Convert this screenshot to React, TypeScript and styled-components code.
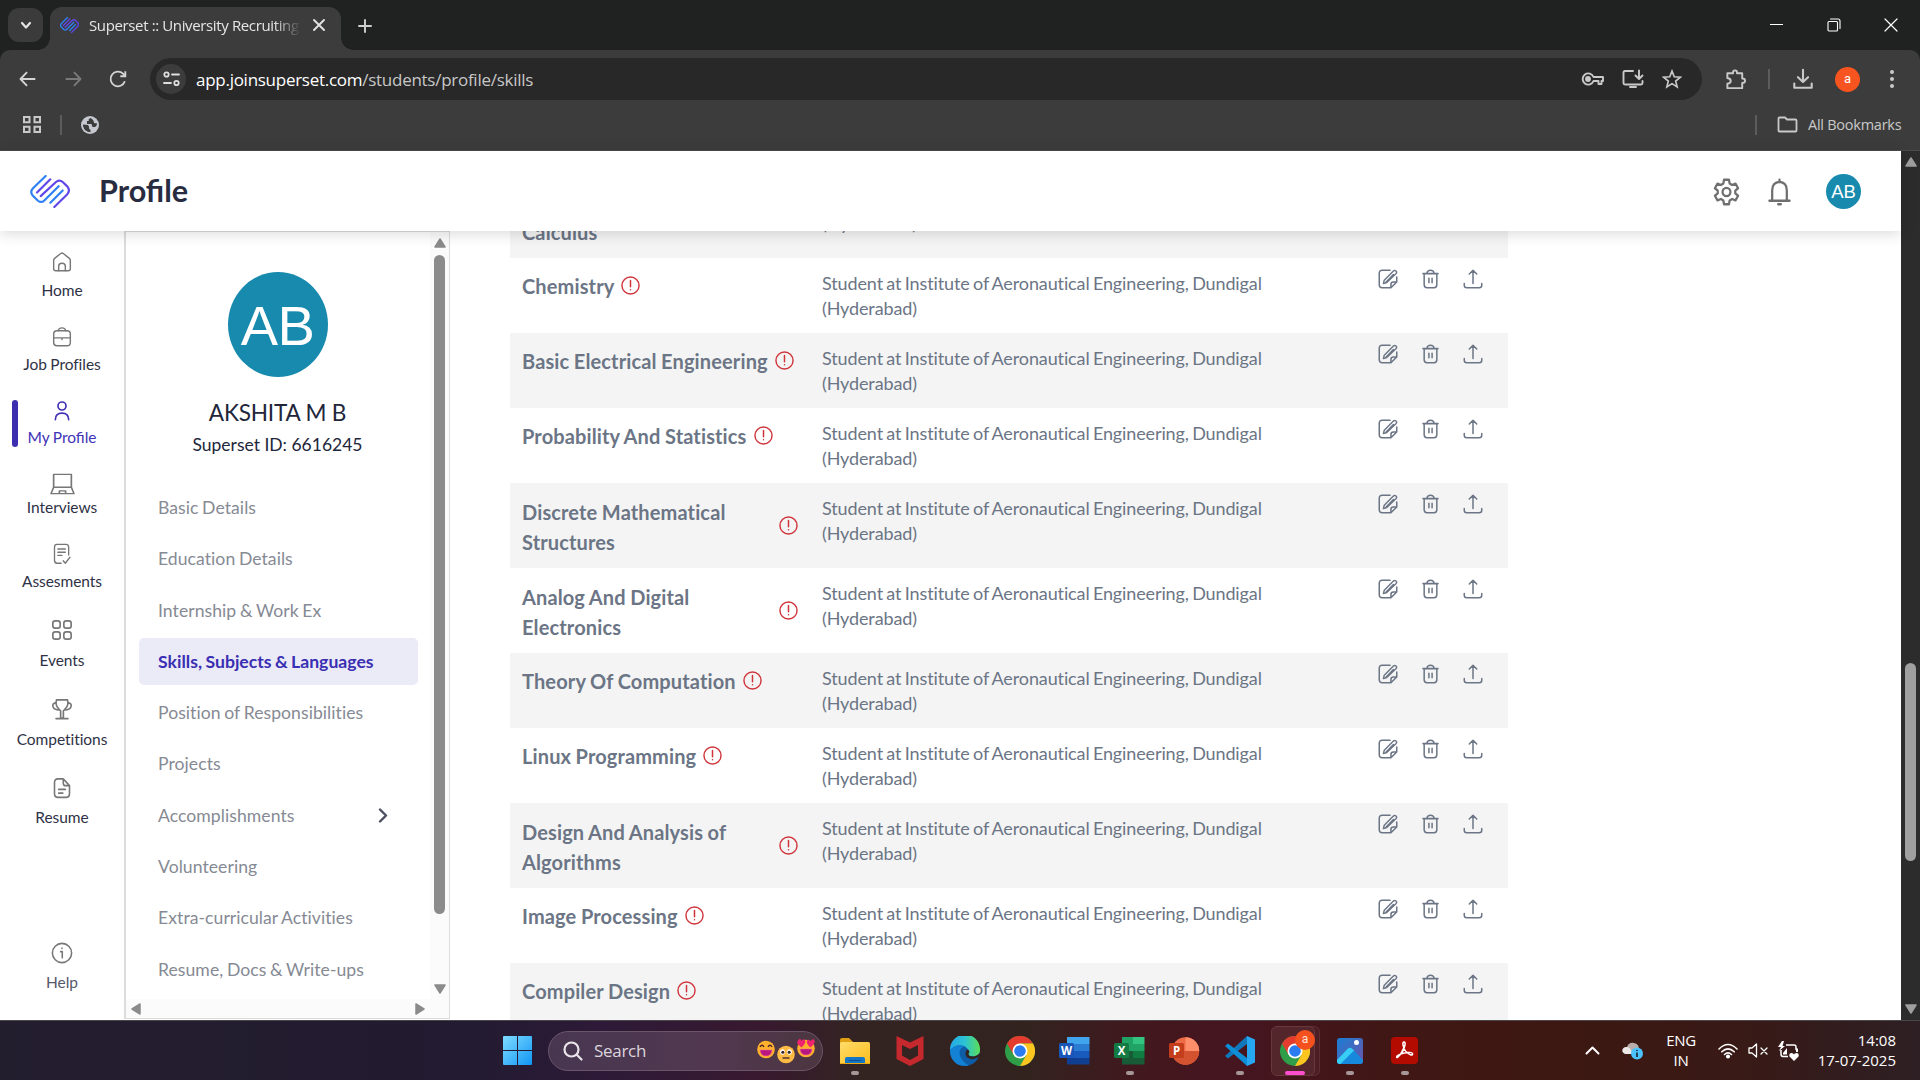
import React from "react";
import styled, { createGlobalStyle } from "styled-components";

const Global = createGlobalStyle`
  *, *::before, *::after { box-sizing: border-box; }
  html, body { margin: 0; padding: 0; overflow: hidden; background: #fff; }
  svg { display: block; flex: none; }
`;

const UI = `"Open Sans", "Noto Sans", sans-serif`;
const LATO = `Lato, "Noto Sans", sans-serif`;

const Screen = styled.div`
  width: 1920px;
  height: 1080px;
  display: flex;
  flex-direction: column;
  overflow: hidden;
  font-family: ${LATO};
`;

const Spacer = styled.div<{ $w?: number }>`
  flex: ${(p) => (p.$w ? "none" : 1)};
  width: ${(p) => p.$w ?? 0}px;
`;

const GradientDefs = styled.svg`
  position: absolute;
`;

/* ---------- Browser chrome ---------- */

const TabStrip = styled.div`
  height: 50px;
  flex: none;
  display: flex;
  align-items: flex-end;
  background: #1f2221;
  padding-left: 8px;
`;

const TabSearch = styled.div`
  width: 35px;
  height: 34px;
  margin: 0 7px 8px 0;
  border-radius: 11px;
  background: #3b3b3b;
  display: grid;
  place-items: center;
`;

const Tab = styled.div`
  position: relative;
  width: 291px;
  height: 43px;
  border-radius: 12px 12px 0 0;
  background: #3c3c3c;
  display: flex;
  align-items: center;
  padding: 0 14px 7px 10px;
  &::before, &::after {
    content: "";
    position: absolute;
    bottom: 0;
    width: 12px;
    height: 12px;
  }
  &::before { left: -12px; background: radial-gradient(circle at 0 0, transparent 11.5px, #3c3c3c 12px); }
  &::after { right: -12px; background: radial-gradient(circle at 100% 0, transparent 11.5px, #3c3c3c 12px); }
`;

const TabTitle = styled.div`
  width: 210px;
  margin: 0 14px 0 9px;
  overflow: hidden;
  white-space: nowrap;
  font: 400 15px/22px ${UI};
  letter-spacing: -0.37px;
  color: #e6e6e6;
  mask-image: linear-gradient(90deg, #000 88%, transparent 101%);
`;

const NewTab = styled.div`
  margin: 0 0 17.5px 17px;
`;

const WindowButtons = styled.div`
  margin-left: auto;
  height: 49px;
  margin-bottom: 1px;
  padding-right: 1px;
  display: flex;
  align-items: center;
  & > * { width: 57px; display: grid; place-items: center; }
`;

const Toolbar = styled.div`
  height: 58px;
  flex: none;
  display: flex;
  align-items: center;
  background: #1f2221;
`;

const ToolbarInner = styled.div`
  width: 100%;
  height: 58px;
  display: flex;
  align-items: center;
  background: #3c3c3c;
  border-radius: 10px 10px 0 0;
  padding-left: 17px;
`;

const NavIcons = styled.div`
  width: 133px;
  display: flex;
  gap: 23px;
`;

const Omnibox = styled.div`
  width: 1552px;
  height: 42px;
  border-radius: 21px;
  background: #282828;
  display: flex;
  align-items: center;
  padding: 0 20px 0 6px;
`;

const SiteInfo = styled.div`
  width: 30px;
  height: 30px;
  border-radius: 50%;
  background: #3c3c3c;
  display: grid;
  place-items: center;
`;

const Url = styled.div`
  flex: 1;
  margin: 1px 0 0 10px;
  font: 400 17px/24px ${UI};
  letter-spacing: -0.27px;
  color: #c7c7c7;
  white-space: nowrap;
  b { font-weight: 400; color: #fff; }
`;

const OmniIcons = styled.div`
  display: flex;
  align-items: center;
  gap: 18px;
`;

const ToolRight = styled.div`
  flex: 1;
  display: flex;
  align-items: center;
  padding: 0 15px 0 22px;
`;

const Divider = styled.div`
  width: 2px;
  height: 20px;
  background: #5c5c5c;
`;

const Account = styled.div`
  width: 25px;
  height: 25px;
  margin: 0 20px 0 21px;
  border-radius: 50%;
  background: #f8541f;
  color: #fff;
  font: 400 13px/24px Roboto, sans-serif;
  text-align: center;
`;

const Bookmarks = styled.div`
  height: 43px;
  flex: none;
  display: flex;
  align-items: center;
  background: #3c3c3c;
  padding: 0 17px 9px 22px;
  border-bottom: 1px solid #4a4a4a;
`;

const BookmarkLabel = styled.span`
  margin-left: 10px;
  width: 95px;
  white-space: nowrap;
  font: 400 14.5px/20px ${UI};
  letter-spacing: -0.25px;
  color: #c9c9c9;
`;

/* ---------- Page ---------- */

const Viewport = styled.div`
  height: 869px;
  flex: none;
  display: flex;
  background: #fff;
`;

const Page = styled.div`
  width: 1901px;
  display: flex;
  flex-direction: column;
`;

const Header = styled.header`
  position: relative;
  z-index: 2;
  height: 80px;
  flex: none;
  display: flex;
  align-items: center;
  background: #fff;
  padding: 0 40px 0 30px;
  box-shadow: 0 2px 14px rgba(0, 0, 0, 0.16);
`;

const Title = styled.h1`
  flex: 1;
  margin: 0 0 0 29px;
  font: 700 30.6px/40px ${LATO};
  color: #282c40;
`;

const HeaderIcons = styled.div`
  display: flex;
  align-items: center;
  margin-top: 1px;
`;

const SmallAvatar = styled.div`
  width: 35px;
  height: 35px;
  margin-left: 33px;
  border-radius: 50%;
  background: #178aae;
  color: #fff;
  font: 400 18.5px/36px "Liberation Sans", sans-serif;
  text-align: center;
`;

const Body = styled.div`
  flex: 1;
  min-height: 0;
  display: flex;
`;

const Rail = styled.nav`
  width: 124px;
  display: flex;
  flex-direction: column;
  align-items: center;
`;

const RailItem = styled.div<{ $mt: number; $gap: number; $active?: boolean; $dim?: boolean }>`
  position: relative;
  width: 124px;
  margin-top: ${(p) => p.$mt}px;
  display: flex;
  flex-direction: column;
  align-items: center;
  gap: ${(p) => p.$gap}px;
  color: ${(p) => (p.$active ? "#4133b7" : "#777")};
  span {
    font: 400 15.5px/20px ${LATO};
    letter-spacing: ${(p) => (p.$active ? "normal" : "-0.05px")};
    word-spacing: -0.5px;
    white-space: nowrap;
    color: ${(p) => (p.$active ? "#4133b7" : p.$dim ? "#55586a" : "#2f3246")};
  }
`;

const ActiveMark = styled.i`
  position: absolute;
  left: 12px;
  top: 1px;
  width: 6px;
  height: 47px;
  border-radius: 3px;
  background: #3b2fb0;
`;

const IconBox = styled.div`
  height: 24px;
  display: grid;
  place-items: center;
`;

const Panel = styled.aside`
  width: 326px;
  height: 788px;
  border: 1px solid #dcdcdc;
  border-left-width: 2px;
  display: grid;
  grid-template: 767px 19px / 1fr 19px;
`;

const PanelContent = styled.div`
  min-height: 0;
  overflow: hidden;
  padding-left: 13px;
  display: flex;
  flex-direction: column;
`;

const ProfileBlock = styled.div`
  width: 277px;
  display: flex;
  flex-direction: column;
  align-items: center;
`;

const BigAvatar = styled.div`
  width: 100px;
  height: 105px;
  margin-top: 40px;
  border-radius: 50%;
  background: #178aae;
  color: #fff;
  font: 400 56px/107px "Liberation Sans", sans-serif;
  text-align: center;
  letter-spacing: -0.5px;
`;

const Name = styled.div`
  margin-top: 22px;
  font: 400 22.6px/28px ${LATO};
  letter-spacing: -0.2px;
  color: #22263a;
`;

const SupersetId = styled.div`
  margin-top: 5px;
  font: 400 17.5px/26px ${LATO};
  color: #22263a;
`;

const Menu = styled.div`
  margin-top: 26px;
  display: flex;
  flex-direction: column;
  gap: 4.3px;
`;

const MenuItem = styled.div<{ $active?: boolean }>`
  width: 279px;
  height: 47px;
  flex: none;
  display: flex;
  align-items: center;
  justify-content: space-between;
  padding: 1px 30px 0 19px;
  border-radius: 5px;
  white-space: nowrap;
  font: ${(p) => (p.$active ? 700 : 400)} 17.6px/24px ${LATO};
  letter-spacing: ${(p) => (p.$active ? 0.01 : 0.05)}px;
  word-spacing: -0.9px;
  color: ${(p) => (p.$active ? "#3a2fb2" : "#868a94")};
  background: ${(p) => (p.$active ? "#ebeaf7" : "transparent")};
`;

const VBar = styled.div`
  background: #fbfbfb;
  display: flex;
  flex-direction: column;
  align-items: center;
  padding-top: 6px;
`;

const VThumb = styled.div`
  width: 11px;
  height: 659px;
  flex: none;
  margin: 7px 0 70px;
  border-radius: 6px;
  background: #8b8b8b;
`;

const HBar = styled.div`
  background: #fbfbfb;
  display: flex;
  align-items: center;
  justify-content: space-between;
  padding: 0 5px;
`;

const Corner = styled.div`
  background: #fbfbfb;
`;

const Table = styled.main`
  width: 998px;
  margin: -58px 0 0 60px;
  height: 847px;
  overflow: hidden;
`;

const Row = styled.div<{ $tall?: boolean; $shade?: boolean }>`
  display: flex;
  align-items: flex-start;
  height: ${(p) => (p.$tall ? 85 : 75)}px;
  background: ${(p) => (p.$shade ? "#f4f4f4" : "#fff")};
  padding-left: 12px;
`;

const Subject = styled.div<{ $tall?: boolean }>`
  width: 276px;
  margin-right: 24px;
  padding-top: ${(p) => (p.$tall ? 12.5 : 12)}px;
  display: flex;
  align-items: center;
  color: #6b7585;
`;

const SubjectName = styled.div<{ $tall?: boolean }>`
  position: relative;
  top: 1px;
  font: 700 20px/30px ${LATO};
  letter-spacing: 0.13px;
  word-spacing: -0.5px;
  white-space: pre-line;
  flex: ${(p) => (p.$tall ? 1 : "none")};
  margin-right: 7px;
`;

const Institute = styled.div`
  width: 540px;
  padding-top: 13px;
  font: 400 18px/25px ${LATO};
  letter-spacing: -0.12px;
  word-spacing: -1.1px;
  color: #6b7585;
  white-space: pre-line;
`;

const Actions = styled.div`
  display: flex;
  align-items: center;
  gap: 23px;
  margin-left: 15.5px;
  padding-top: 11px;
  color: #6b7585;
`;

const PageScroll = styled.div`
  width: 19px;
  background: #2c2c2c;
  display: flex;
  flex-direction: column;
  align-items: center;
  padding: 6px 0;
`;

const PageThumb = styled.div`
  width: 11px;
  height: 199px;
  margin: 496px 0 143px;
  border-radius: 6px;
  background: #9f9f9f;
`;

/* ---------- Taskbar ---------- */

const Taskbar = styled.footer`
  height: 60px;
  flex: none;
  display: flex;
  align-items: center;
  padding: 0 24px 0 503px;
  border-top: 1px solid #4b4649;
  background: linear-gradient(90deg, #231e2e 0, #221b31 470px, #2d1a38 600px, #38192f 760px, #332422 860px,
    #33231f 1030px, #43171e 1150px, #451520 1240px, #401714 1400px, #3c1812 1600px, #381a17 1750px, #2d1f24 1920px);
`;

const SearchBox = styled.div`
  width: 275px;
  height: 40px;
  margin: 0 4px 0 16px;
  border-radius: 20px;
  border: 1px solid #6b5569;
  background: linear-gradient(90deg, #483650, #513850 60%, #4c3640);
  display: flex;
  align-items: center;
  padding: 0 6px 0 14px;
  span {
    flex: 1;
    margin-left: 11px;
    font: 400 17px/24px ${UI};
    letter-spacing: -0.3px;
    color: #dcd5dd;
  }
`;

const TaskApp = styled.div<{ $active?: boolean }>`
  position: relative;
  width: 55px;
  height: 50px;
  display: grid;
  place-items: center;
  &::before {
    content: "";
    position: absolute;
    inset: 0 7px 0 4px;
    border-radius: 6px;
    border: ${(p) => (p.$active ? "1px solid #68383c" : "none")};
    background: ${(p) => (p.$active ? "#52262b" : "none")};
    box-shadow: ${(p) => (p.$active ? "5px 0 0 -1px #4b1e23, 5px 0 0 0 #5d2d32" : "none")};
  }
  svg { position: relative; }
`;

const Indicator = styled.i<{ $pink?: boolean }>`
  position: absolute;
  bottom: 1px;
  width: ${(p) => (p.$pink ? 20 : 8)}px;
  height: 4px;
  border-radius: 2px;
  background: ${(p) => (p.$pink ? "#ff4fd0" : "#a79799")};
`;

const AppBadge = styled.i`
  position: absolute;
  right: 7px;
  top: 4px;
  width: 20px;
  height: 20px;
  border-radius: 50%;
  background: #f4511e;
  color: #ffe5dc;
  font: 400 12px/18px Roboto, sans-serif;
  text-align: center;
`;

const OfficeTile = styled.div<{ $c: string }>`
  position: absolute;
  left: 12px;
  top: 17px;
  width: 15px;
  height: 15px;
  border-radius: 1.5px;
  background: ${(p) => p.$c};
  color: #fff;
  font: 700 11.5px/15px "Open Sans", sans-serif;
  text-align: center;
`;

const Tray = styled.div`
  margin-left: auto;
  display: flex;
  align-items: center;
  color: #fff;
`;

const TrayText = styled.div<{ $align: string; $w: number; $ml: number; $ls?: number }>`
  width: ${(p) => p.$w}px;
  margin-left: ${(p) => p.$ml}px;
  margin-top: -1px;
  text-align: ${(p) => p.$align};
  font: 400 15px/20px ${UI};
  letter-spacing: ${(p) => p.$ls ?? -0.3}px;
  white-space: pre-line;
`;

/* ---------- Icons ---------- */

type IcoProps = { w?: number; h?: number; vb?: string; sw?: number; c?: string; children: React.ReactNode };

const Ico = ({ w = 20, h, vb = "0 0 24 24", sw = 1.8, c = "currentColor", children }: IcoProps) => (
  <svg width={w} height={h ?? w} viewBox={vb} fill="none" stroke={c} strokeWidth={sw} strokeLinecap="round" strokeLinejoin="round" preserveAspectRatio="none">
    {children}
  </svg>
);

const SupersetLogo = ({ w, h, sw = 6.5 }: { w: number; h: number; sw?: number }) => (
  <Ico w={w} h={h} vb="0 0 120 100" sw={sw} c="#2f80f5">
    <path d="M47 3 9 40Q-1 51 8 62L24 78Q34 86 43 77L86 34M98 47 61 84" />
    <path d="M61 13 21 53M32 64 77 22Q88 12 99 22L113 36Q121 47 112 58L73 97" stroke="#6048e8" />
  </Ico>
);

const railIcons: Record<string, React.ReactNode> = {
  home: <Ico sw={1.7}><path d="M2 10Q2 8.500 3.500 7.300L10.500 1.800Q12 .8 13.500 1.800L20.500 7.300Q22 8.500 22 10V20Q22 22.500 19.500 22.500H4.500Q2 22.500 2 20Z" /><path d="M8 22.500V17Q8 13.500 12 13.500T16 17V22.500" /></Ico>,
  job: <Ico sw={1.7}><rect x="2" y="4.500" width="20" height="18" rx="4" /><path d="M7.500 4.500Q8 1 12 1T16.500 4.500M2 13H22M12 14V15" /></Ico>,
  profile: <Ico w={20} sw={2}><circle cx="12" cy="6" r="4.800" /><path d="M4 22.500Q4 14.500 12 14.500T20 22.500" /></Ico>,
  interviews: <Ico w={25} h={22} sw={1.6}><path d="M3.500 1.500H20.500V15.500H3.500ZM3.500 15.500 1 22.500H23L20.500 15.500M9 22V19.500H15V22" /></Ico>,
  assess: <Ico w={20} h={22} sw={1.6}><path d="M20 13V5Q20 1.500 17 1.500H6Q3 1.500 3 4.500V18.500Q3 22 6 22H11M7 6.500H16M7 10H16M7 13.500H12M13.500 19.500 16 22 21.500 15.500" /></Ico>,
  events: <Ico w={22} sw={1.8}><rect x="2" y="2" width="8" height="8" rx="2.600" /><rect x="14" y="2" width="8" height="8" rx="2.600" /><rect x="2" y="14" width="8" height="8" rx="2.600" /><rect x="14" y="14" width="8" height="8" rx="2.600" /></Ico>,
  comp: <Ico w={22} sw={1.8}><path d="M6 2H18L18.500 5Q18.500 10 13.500 14V22H10.500V14Q5.500 10 5.500 5ZM5.500 5Q1 6 2.200 9.500T9 13M18.500 5Q23 6 21.800 9.500T15 13M5.500 22.500H18.500" /></Ico>,
  resume: <Ico w={20} h={22} sw={1.9}><path d="M7 2H13.500L21 9.500V18Q21 22.200 17 22.200H7Q3 22.200 3 18V6Q3 2 7 2ZM13.500 2V6.500Q13.500 9.500 16.500 9.500H21M8 13.500H16M8 17.500H13" /></Ico>,
  help: <Ico w={22} sw={1.7}><circle cx="12" cy="12" r="10.500" /><path d="M10.500 10.500H12.300V17.300M12 6.700V7" /></Ico>,
};

const Alert = () => (
  <Ico w={19} h={19} sw={1.8} c="#d0353c"><circle cx="12" cy="12" r="10.800" /><path d="M12 5.800V13.500M12 17.300V17.500" strokeWidth="1.9" /></Ico>
);

const RowActions = () => (
  <Actions>
    <Ico w={20} sw={1.8}>
      <path d="M14.500 1.500H5Q1.500 1.500 1.500 5V19Q1.500 22.500 5 22.500H15.500L22.500 15.500V9.500M15.500 22V18.500Q15.500 15.500 18.500 15.500H22" />
      <path d="M18.500 2.500Q20 1 21.600 2.400T21.500 5.800L10.500 16.200 6.500 17.500 7.500 13.400ZM9.500 16 18.500 6.500" strokeWidth="1.700" />
    </Ico>
    <Ico w={19} h={20} sw={1.9}><path d="M4 5.500V19Q4 22.500 7.500 22.500H16.500Q20 22.500 20 19V5.500M2.500 5.500H21.500M7.500 5Q8 1.500 12 1.500T16.500 5M10 11V16.500M14 11V16.500" /></Ico>
    <Ico w={20} sw={1.8}><path d="M1.500 17.500V19.500Q1.500 22.500 4.500 22.500H19.500Q22.500 22.500 22.500 19.500V17.500M12 17.500V1.500M7.500 6 12 1.500 16.500 6" /></Ico>
  </Actions>
);

const Arrow = ({ dir, c = "#8b8b8b" }: { dir: "up" | "down" | "left" | "right"; c?: string }) => {
  const d = { up: "M6 1 11 9H1Z", down: "M1 1H11L6 9Z", left: "M1 6 9 1V11Z", right: "M9 6 1 1V11Z" }[dir];
  const vert = dir === "up" || dir === "down";
  return (
    <svg width={vert ? 12 : 10} height={vert ? 10 : 12} viewBox={vert ? "0 0 12 10" : "0 0 10 12"}>
      <path d={d} fill={c} stroke={c} strokeWidth="1.500" strokeLinejoin="round" />
    </svg>
  );
};

const Emoji = ({ kind }: { kind: "smile" | "flat" | "love" }) => (
  <svg width="20" height="26" viewBox="0 0 20 26">
    <g transform={kind === "flat" ? "translate(0 4.500)" : kind === "love" ? "translate(0 -1.500)" : "translate(0 -.500)"}>
      <circle cx="10" cy="12" r="8.800" fill={kind === "flat" ? "#fdbb45" : "#ffb12e"} />
      {kind === "flat" ? (
        <>
          <ellipse cx="6.500" cy="9.500" rx="2.300" ry="2.700" fill="#fff" /><ellipse cx="13.500" cy="9.500" rx="2.300" ry="2.700" fill="#fff" />
          <circle cx="6.800" cy="9.700" r="1.500" fill="#35202c" /><circle cx="13.200" cy="9.700" r="1.500" fill="#35202c" />
          <path d="M6.500 15.500H13.500" stroke="#5a302c" strokeWidth="1.500" />
        </>
      ) : (
        <path d="M4 12.500H16Q15.500 18.500 10 18.500T4 12.500Z" fill="#b8177f" stroke="#ff5aa0" strokeWidth=".5" />
      )}
      {kind === "smile" && <path d="M4 9.500Q6 6 8 9.500M12 9.500Q14 6 16 9.500" fill="none" stroke="#4a2430" strokeWidth="1.400" />}
      {kind === "love" && <path d="M5.500 11Q-.5 7 2 4T5.500 4.500Q7.500 1.500 9 4T5.500 11ZM14.500 11Q10 7 11 4.500T14.500 4.500Q17.500 1.500 18.500 4T14.500 11Z" fill="#f0246e" />}
    </g>
  </svg>
);

const Chrome = () => (
  <svg width="30" height="30" viewBox="0 0 48 48">
    <circle cx="24" cy="24" r="24" fill="#2e9e49" />
    <path d="M3.200 12A24 24 0 0 1 44.800 12H24L13.600 30Z" fill="#e33b2e" />
    <path d="M44.800 12A24 24 0 0 1 24 48L34.400 30 24 12Z" fill="#fcc51f" />
    <circle cx="24" cy="24" r="12" fill="#fff" /><circle cx="24" cy="24" r="9.300" fill="#2b7cf0" />
  </svg>
);

const taskApps: { id: string; icon: React.ReactNode; dot?: boolean; tile?: [string, string] }[] = [
  { id: "files", dot: true, icon: <svg width="30" height="28" viewBox="0 0 30 28"><path d="M0 3Q0 1 2 1H9L13 5V10H0Z" fill="#dfa013" /><rect y="5" width="30" height="22" rx="1.500" fill="url(#gFolder)" /><path d="M5 27V22Q5 20 7 20H23Q25 20 25 22V27Z" fill="#1275c8" /><path d="M9 23.500H21" stroke="#0b4f8c" strokeWidth="1" /><path d="M0 26.500H30" stroke="#e8a910" /></svg> },
  { id: "mcafee", icon: <svg width="28" height="30" viewBox="0 0 28 30"><path d="M.5 0 14 6.500 27.500 0V23L14 30 .5 23ZM6 9V19.500L14 24 22 19.500V9L14 13Z" fill="#c5282d" fillRule="evenodd" /></svg> },
  { id: "edge", icon: <svg width="30" height="30" viewBox="0 0 30 30"><circle cx="15" cy="15" r="15" fill="#0d5ca8" /><path d="M0 14A15 15 0 0 1 30 13Q30.500 20 23 20.500 17 20.500 18 17.500 20 14 15 10.500 7 7 0 14Z" fill="url(#gEdge)" /><path d="M0 14Q7 7 14 10.500 8 13 10 20 13 27 19 29.400 8 31.500 3 24 0 20 0 14Z" fill="#1482d4" /><path d="M30 20Q26 24 21 23 15 22 15.500 17 16 13.500 18 13.500 20.500 15.500 18.500 18 18.500 20.500 24 20.500 28 20 29.600 17Z" fill="#332321" /></svg> },
  { id: "chrome", icon: <Chrome /> },
  { id: "word", tile: ["W", "#1a56b8"], icon: <svg width="30" height="28" viewBox="0 0 30 28"><rect x="7" width="22.500" height="7" fill="#41a5ee" /><rect x="7" y="7" width="22.500" height="7" fill="#2b7cd3" /><rect x="7" y="14" width="22.500" height="7" fill="#185abd" /><rect x="7" y="21" width="22.500" height="6.500" fill="#103f91" /></svg> },
  { id: "excel", dot: true, tile: ["X", "#137a43"], icon: <svg width="30" height="28" viewBox="0 0 30 28"><path d="M7 0H18V14H7Z" fill="#21a366" /><path d="M18 0H29.500V7H18Z" fill="#33c481" /><path d="M18 7H29.500V14H18Z" fill="#21a366" /><path d="M7 14H18V21H7Z" fill="#185c37" /><path d="M18 14H29.500V21H18Z" fill="#107c41" /><path d="M7 21H29.500V27.500H7Z" fill="#185c37" /></svg> },
  { id: "ppt", tile: ["P", "#c43e1c"], icon: <svg width="30" height="28" viewBox="0 0 30 28"><circle cx="15.500" cy="14" r="13.700" fill="#ed6c47" /><path d="M15.500.3A13.700 13.700 0 0 1 29.200 14H15.500Z" fill="#ff8f6b" /><path d="M29.200 14A13.700 13.700 0 0 1 1.800 14Z" fill="#d35230" /></svg> },
  { id: "code", dot: true, icon: <svg width="30" height="30" viewBox="0 0 30 30"><path d="M22 8 3 22.500 0 20 22 0Z" fill="#1177bb" /><path d="M22 22 3 7.500 0 10 22 30Z" fill="#0d8ed6" /><path d="M22 0 30 3.500V26.500L22 30Z" fill="#27a7f2" /></svg> },
  { id: "active", icon: <Chrome /> },
  { id: "photos", dot: true, icon: <svg width="26" height="26" viewBox="0 0 26 26"><rect width="26" height="26" rx="3" fill="url(#gPhoto)" /><path d="M0 22 10.500 11Q13 8.500 15.500 11L26 22V23Q26 26 23 26H3Q0 26 0 23Z" fill="#1689dc" /><path d="M0 22 10.500 11Q13 8.500 15.500 11L17 12.500 3.500 26H3Q0 26 0 23Z" fill="#38cdf5" /><circle cx="19.500" cy="4.500" r="2.500" fill="#fff" /></svg> },
  { id: "acrobat", dot: true, icon: <svg width="27" height="27" viewBox="0 0 27 27"><rect width="27" height="27" rx="4" fill="#b30b00" /><path d="M6 20Q12 17 14 8 14.500 5 13 5T12 8Q13 15 20 18 22 18 21.500 16.500T17 15.500Q9 16.500 6 19 5 21 6.500 20.500 10 18 14 8" fill="none" stroke="#fff" strokeWidth="1.500" /></svg> },
];

/* ---------- Data ---------- */

const rail: { id: string; label: string; mt: number; gap: number }[] = [
  { id: "home", label: "Home", mt: 19, gap: 6 },
  { id: "job", label: "Job Profiles", mt: 25, gap: 5 },
  { id: "profile", label: "My Profile", mt: 25, gap: 4 },
  { id: "interviews", label: "Interviews", mt: 25, gap: 1 },
  { id: "assess", label: "Assesments", mt: 25, gap: 5 },
  { id: "events", label: "Events", mt: 27, gap: 8 },
  { id: "comp", label: "Competitions", mt: 27, gap: 8 },
  { id: "resume", label: "Resume", mt: 27, gap: 7 },
  { id: "help", label: "Help", mt: 114, gap: 7 },
];

const menu = [
  "Basic Details", "Education Details", "Internship & Work Ex", "Skills, Subjects & Languages",
  "Position of Responsibilities", "Projects", "Accomplishments", "Volunteering",
  "Extra-curricular Activities", "Resume, Docs & Write-ups",
];

const subjects = [
  "Linear Algebra And\nCalculus", "Chemistry", "Basic Electrical Engineering", "Probability And Statistics",
  "Discrete Mathematical\nStructures", "Analog And Digital\nElectronics", "Theory Of Computation",
  "Linux Programming", "Design And Analysis of\nAlgorithms", "Image Processing", "Compiler Design",
];

const INSTITUTE = "Student at Institute of Aeronautical Engineering, Dundigal\n(Hyderabad)";

export default function App() {
  return (
    <Screen>
      <Global />
      <GradientDefs width="0" height="0">
        <defs>
          <linearGradient id="gFolder" x1="0" y1="0" x2="1" y2="1"><stop stopColor="#ffdc6a" /><stop offset="1" stopColor="#fbbd1d" /></linearGradient>
          <linearGradient id="gEdge"><stop stopColor="#25a8e8" /><stop offset=".5" stopColor="#2cc3d3" /><stop offset="1" stopColor="#5bdd55" /></linearGradient>
          <linearGradient id="gPhoto" x1="0" y1="0" x2="1" y2="1"><stop stopColor="#187fd5" /><stop offset="1" stopColor="#6e53a8" /></linearGradient>
          <linearGradient id="gWin" x1="0" y1="0" x2="1" y2="1"><stop stopColor="#7fdcff" /><stop offset="1" stopColor="#1196f5" /></linearGradient>
        </defs>
      </GradientDefs>

      <TabStrip>
        <TabSearch><Ico w={12} h={9} vb="0 0 12 9" sw={2.2} c="#e3e3e3"><path d="M2 2 6 6.500 10 2" /></Ico></TabSearch>
        <Tab>
          <SupersetLogo w={19} h={16} sw={8.5} />
          <Spacer $w={1} />
          <TabTitle>Superset :: University Recruiting</TabTitle>
          <Ico w={12} h={12} vb="0 0 12 12" sw={1.9} c="#e3e3e3"><path d="M1 1 11 11M11 1 1 11" /></Ico>
        </Tab>
        <NewTab><Ico w={14} h={14} vb="0 0 14 14" sw={1.9} c="#d0d0d0"><path d="M7 1V13M1 7H13" /></Ico></NewTab>
        <WindowButtons>
          <div><svg width="13" height="3"><path d="M0 1.500H13" stroke="#fff" /></svg></div>
          <div><Ico w={14} h={14} vb="0 0 14 14" sw={1.1} c="#fff"><rect x="1" y="3.500" width="9.500" height="9.500" rx="1" /><path d="M3.500 1H11Q13 1 13 3V10.500" /></Ico></div>
          <div><Ico w={14} h={14} vb="0 0 14 14" sw={1.2} c="#fff"><path d="M1 1 13 13M13 1 1 13" /></Ico></div>
        </WindowButtons>
      </TabStrip>

      <Toolbar>
        <ToolbarInner>
          <NavIcons>
            <Ico w={22} sw={2} c="#d4d4d4"><path d="M20 12H4M11 4.500 3.800 12 11 19.500" strokeLinecap="butt" /></Ico>
            <Ico w={22} sw={2} c="#7a7a7a"><path d="M4 12H20M13 4.500 20.200 12 13 19.500" strokeLinecap="butt" /></Ico>
            <Ico w={22} sw={2} c="#d4d4d4"><path d="M19.500 14.500A8 8 0 1 1 17.500 6.200L19.500 8.500M20 3.500V9H14.500" strokeLinecap="butt" strokeLinejoin="miter" /></Ico>
          </NavIcons>
          <Omnibox>
            <SiteInfo><Ico w={17} h={16} vb="0 0 17 16" sw={1.8} c="#dedede"><circle cx="3.500" cy="3.500" r="2.200" /><path d="M9 3.500H16M1 12H8" /><circle cx="13.500" cy="12" r="2.200" /></Ico></SiteInfo>
            <Url><b>app.joinsuperset.com</b>/students/profile/skills</Url>
            <OmniIcons>
              <Ico w={23} h={16} vb="0 0 23 16" sw={1.9} c="#c9c9c9"><path d="M12.500 6H22V10H20.500V13H17.500V10H12.500A5.600 5.600 0 1 1 12.500 6Z" /><circle cx="7" cy="8" r="2" fill="#c9c9c9" /></Ico>
              <Ico w={22} h={20} vb="0 0 22 20" sw={1.9} c="#c9c9c9"><path d="M11 2H3Q1.500 2 1.500 3.500V14Q1.500 15.500 3 15.500H19Q20.500 15.500 20.500 14V12M8 18H14M17 1.500V9.500M13.500 6.500 17 10 20.500 6.500" /></Ico>
              <Ico w={20} sw={2} c="#c9c9c9"><path d="M12 2.500 14.700 9.300 22 9.800 16.400 14.400 18.200 21.500 12 17.600 5.800 21.500 7.600 14.400 2 9.800 9.300 9.300Z" strokeLinejoin="miter" /></Ico>
            </OmniIcons>
          </Omnibox>
          <ToolRight>
            <Ico w={23} sw={2} c="#c9c9c9"><path d="M4.500 5.500H9.500Q9 2.500 11.500 2.500T13.500 5.500H19V11Q22 11 22 13.300T19 15.500V21H3.500V16.500Q7 16 7 13.500T3.500 10.500V5.500Z" /></Ico>
            <Spacer $w={21} />
            <Divider />
            <Spacer $w={22} />
            <Ico w={22} sw={2.3} c="#c9c9c9"><path d="M12 2V14.500M6.500 10 12 15.200 17.500 10M2.500 17V21.500H21.500V17" /></Ico>
            <Account>a</Account>
            <svg width="24" height="20" viewBox="0 0 24 20" fill="#c9c9c9"><circle cx="12" cy="3" r="2" /><circle cx="12" cy="10" r="2" /><circle cx="12" cy="17" r="2" /></svg>
          </ToolRight>
        </ToolbarInner>
      </Toolbar>

      <Bookmarks>
        <Ico w={20} h={19} vb="0 0 20 19" sw={2} c="#c9c9c9"><path d="M2 2H7.500V7.200H2ZM12.500 2H18V7.200H12.500ZM2 11.800H7.500V17H2ZM12.500 11.800H18V17H12.500Z" strokeLinejoin="miter" /></Ico>
        <Spacer $w={18} />
        <Divider />
        <Spacer $w={19} />
        <svg width="18" height="18" viewBox="0 0 18 18"><circle cx="9" cy="9" r="9" fill="#c5c9cf" /><path d="M9.500 2Q6.500 3.500 8 5H6V8H10.500L11.500 11H14Q15.800 10 16.200 7.500L13 7Q13 4 9.500 2ZM2 8.500 7 9Q8.500 10.500 8 12.500L9.500 14V16.200Q3.500 16 2 10Z" fill="#3c3c3c" /></svg>
        <Spacer />
        <Divider />
        <Spacer $w={20} />
        <Ico w={21} h={17} vb="0 0 21 17" sw={1.8} c="#c9c9c9"><path d="M1.500 2.500Q1.500 1.500 2.500 1.500H8L10 3.500H18.500Q19.500 3.500 19.500 4.500V14.500Q19.500 15.500 18.500 15.500H2.500Q1.500 15.500 1.500 14.500Z" /></Ico>
        <BookmarkLabel>All Bookmarks</BookmarkLabel>
      </Bookmarks>

      <Viewport>
        <Page>
          <Header>
            <SupersetLogo w={40} h={33} />
            <Title>Profile</Title>
            <HeaderIcons>
              <Ico w={27} h={28} sw={2} c="#6f6f6f"><path d="M9.800 1.500H14.200L14.800 4.700 17 6 20 4.900 22.300 8.800 19.800 10.800V13.200L22.300 15.200 20 19.100 17 18 14.800 19.300 14.200 22.500H9.800L9.200 19.300 7 18 4 19.100 1.700 15.200 4.200 13.200V10.800L1.700 8.800 4 4.900 7 6 9.200 4.700Z" /><circle cx="12" cy="12" r="3.500" /></Ico>
              <Spacer $w={26} />
              <Ico w={27} h={28} sw={2} c="#6f6f6f"><path d="M3 19.500H21M5.500 19.500V10.500Q5.500 3.800 12 3.300 18.500 3.800 18.500 10.500V19.500M12 3V1.500M10.800 22.500H13.200" /></Ico>
              <SmallAvatar>AB</SmallAvatar>
            </HeaderIcons>
          </Header>
          <Body>
            <Rail>
              {rail.map((r) => (
                <RailItem key={r.id} $mt={r.mt} $gap={r.gap} $active={r.id === "profile"} $dim={r.id === "help"}>
                  {r.id === "profile" && <ActiveMark />}
                  <IconBox>{railIcons[r.id]}</IconBox>
                  <span>{r.label}</span>
                </RailItem>
              ))}
            </Rail>
            <Panel>
              <PanelContent>
                <ProfileBlock>
                  <BigAvatar>AB</BigAvatar>
                  <Name>AKSHITA M B</Name>
                  <SupersetId>Superset ID: 6616245</SupersetId>
                </ProfileBlock>
                <Menu>
                  {menu.map((m, i) => (
                    <MenuItem key={m} $active={i === 3}>
                      {m}
                      {m === "Accomplishments" && <Ico w={10} h={15} vb="0 0 10 15" sw={2.4} c="#4b4f60"><path d="M2 1.500 8 7.500 2 13.500" /></Ico>}
                    </MenuItem>
                  ))}
                </Menu>
              </PanelContent>
              <VBar><Arrow dir="up" /><VThumb /><Arrow dir="down" /></VBar>
              <HBar><Arrow dir="left" /><Arrow dir="right" /></HBar>
              <Corner />
            </Panel>
            <Table>
              {subjects.map((s, i) => {
                const tall = s.includes("\n");
                return (
                  <Row key={s} $tall={tall} $shade={i % 2 === 0}>
                    <Subject $tall={tall}>
                      <SubjectName $tall={tall}>{s}</SubjectName>
                      <Alert />
                    </Subject>
                    <Institute>{INSTITUTE}</Institute>
                    <RowActions />
                  </Row>
                );
              })}
            </Table>
          </Body>
        </Page>
        <PageScroll><Arrow dir="up" c="#9f9f9f" /><PageThumb /><Arrow dir="down" c="#9f9f9f" /></PageScroll>
      </Viewport>

      <Taskbar>
        <svg width="29" height="29" viewBox="0 0 29 29"><path d="M1 0H14V14H0V1Q0 0 1 0ZM15 0H28Q29 0 29 1V14H15ZM0 15H14V29H1Q0 29 0 28ZM15 15H29V28Q29 29 28 29H15Z" fill="url(#gWin)" /></svg>
        <SearchBox>
          <Ico w={20} h={20} vb="0 0 20 20" sw={2.2} c="#e9e4ea"><circle cx="8.500" cy="8.500" r="7" /><path d="M13.800 13.800 18.500 18.500" /></Ico>
          <span>Search</span>
          <Emoji kind="smile" /><Emoji kind="flat" /><Emoji kind="love" />
        </SearchBox>
        {taskApps.map((a) => (
          <TaskApp key={a.id} $active={a.id === "active"}>
            {a.icon}
            {a.tile && <OfficeTile $c={a.tile[1]}>{a.tile[0]}</OfficeTile>}
            {a.id === "active" && <AppBadge>a</AppBadge>}
            {a.dot && <Indicator />}
            {a.id === "active" && <Indicator $pink />}
          </TaskApp>
        ))}
        <Tray>
          <Ico w={15} h={9} vb="0 0 15 9" sw={2} c="#fff"><path d="M1.500 7.500 7.500 1.500 13.500 7.500" /></Ico>
          <Spacer $w={22} />
          <svg width="22" height="20" viewBox="0 0 22 20"><path d="M4 13Q0 12 .5 9T5 6Q7 1 12 2T17 8V13Z" fill="#b9adab" /><path d="M4 13Q0 12 .5 9T5 6Q9 6 10 13Z" fill="#ece8e7" /><circle cx="15" cy="12.500" r="6" fill="#4cc2ff" /><path d="M15 11.500V16M15 9V10" stroke="#12222c" strokeWidth="1.600" /></svg>
          <TrayText $align="center" $w={34} $ml={20}>{"ENG\nIN"}</TrayText>
          <Spacer $w={20} />
          <Ico w={20} h={16} vb="0 0 20 16" sw={1.6} c="#fff"><path d="M1 6Q10-3 19 6M3.800 8.800Q10 2.800 16.200 8.800M6.500 11.500Q10 8.300 13.500 11.500" /><circle cx="10" cy="13.500" r="1.300" fill="#fff" /></Ico>
          <Spacer $w={10} />
          <Ico w={20} h={15} vb="0 0 20 15" sw={1.3} c="#fff"><path d="M1 5H4L8.500 1V14L4 10H1ZM13 5 19 11M19 5 13 11" /></Ico>
          <Spacer $w={10} />
          <svg width="21" height="20" viewBox="0 0 21 20"><path d="M8 4H16Q18 4 18 6V9M3 9V13Q3 15.500 5 15.500H10" fill="none" stroke="#fff" strokeWidth="1.500" /><path d="M4 0 0 6H3L1 10 7 5H4.500L6 0ZM5 12 9 7V13.500H5ZM16 20 11.500 15.500Q10.500 12 13.500 12 15.500 12 16 13.500 16.500 12 18.500 12 21.500 12 20.500 15.500Z" fill="#fff" /><path d="M18 7.500H20V11H18Z" fill="#fff" /></svg>
          <TrayText $align="right" $w={89} $ml={8} $ls={0}>{"14:08\n17-07-2025"}</TrayText>
        </Tray>
      </Taskbar>
    </Screen>
  );
}
